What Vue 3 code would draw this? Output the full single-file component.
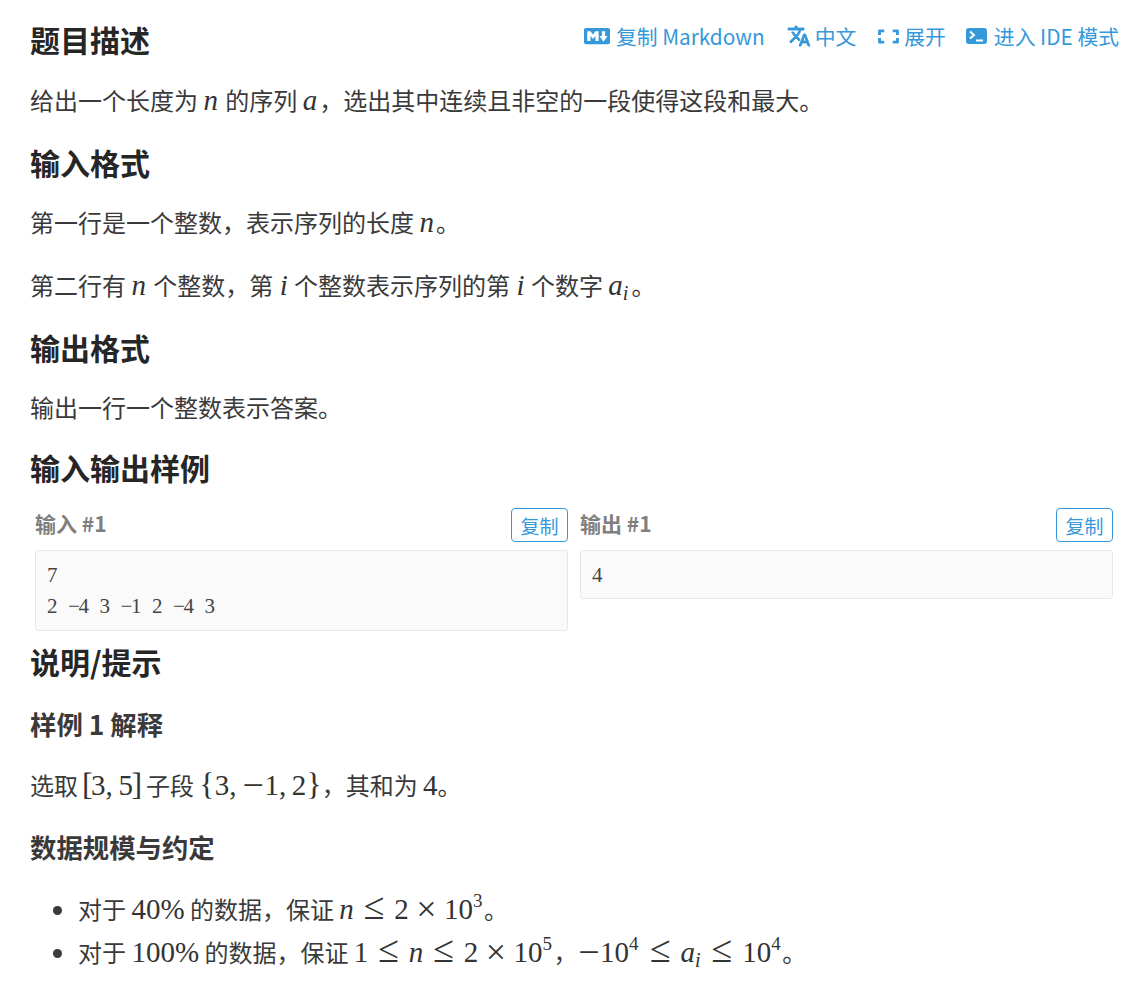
<script setup>
const samples = [
  { title: '输入 #1', lines: ['7', '2 -4 3 -1 2 -4 3'] },
  { title: '输出 #1', lines: ['4'] },
]
</script>

<template>
  <main class="page">
    <header class="head">
      <h2>题目描述</h2>
      <nav class="tools">
        <a class="tool">
          <svg class="i-md" viewBox="0 0 16 16"><path fill="currentColor" d="M14.85 3c.63 0 1.15.52 1.14 1.15v7.7c0 .63-.51 1.15-1.15 1.15H1.15C.52 13 0 12.48 0 11.84V4.15C0 3.52.52 3 1.15 3ZM9 11V5H7L5.5 7 4 5H2v6h2V8l1.5 1.92L7 8v3Zm2.99.5L14.5 8H13V5h-2v3H9.5Z"/></svg>
          <span>复制 Markdown</span>
        </a>
        <a class="tool tool-gap">
          <svg class="i-tr" viewBox="0 0 24 24"><path fill="currentColor" stroke="currentColor" stroke-width=".9" d="M12.87 15.07l-2.54-2.51.03-.03c1.74-1.94 2.98-4.17 3.71-6.53H17V4h-7V2H8v2H1v1.99h11.17C11.5 7.92 10.44 9.75 9 11.35 8.07 10.32 7.3 9.19 6.69 8h-2c.73 1.63 1.73 3.17 2.98 4.56l-5.09 5.02L4 19l5-5 3.11 3.11.76-2.04zM18.5 10h-2L12 22h2l1.12-3h4.75L21 22h2l-4.5-12zm-2.62 7l1.62-4.33L19.12 17h-3.24z"/></svg>
          <span>中文</span>
        </a>
        <a class="tool tool-gap">
          <svg class="i-ex" viewBox="0 0 22 18"><path fill="none" stroke="currentColor" stroke-width="3" stroke-linejoin="round" d="M1.5 7.5V3h5M15.5 3h5v4.5M20.5 10.5V15h-5M6.5 15h-5v-4.5"/></svg>
          <span>展开</span>
        </a>
        <a class="tool">
          <svg class="i-te" viewBox="0 0 21 16"><rect width="21" height="16" rx="3" fill="currentColor"/><path fill="none" stroke="#fff" stroke-width="2" d="M4 3.5 8 7 4 10.5M10 12.5h7"/></svg>
          <span>进入 IDE 模式</span>
        </a>
      </nav>
    </header>

    <p>给出一个长度为 <i class="m v">n</i> 的序列 <i class="m v">a</i>，选出其中连续且非空的一段使得这段和最大。</p>

    <h2>输入格式</h2>
    <p>第一行是一个整数，表示序列的长度 <i class="m v">n</i>。</p>
    <p>第二行有 <i class="m v">n</i> 个整数，第 <i class="m vi">i</i> 个整数表示序列的第 <i class="m vi">i</i> 个数字 <span class="m v"><i>a</i><sub>i</sub></span>。</p>

    <h2>输出格式</h2>
    <p class="plain">输出一行一个整数表示答案。</p>

    <h2>输入输出样例</h2>
    <section class="samples">
      <div v-for="s in samples" :key="s.title" class="sample">
        <div class="sample-top">
          <b>{{ s.title }}</b>
          <button class="copy">复制</button>
        </div>
        <pre class="code"><div v-for="(line, n) in s.lines" :key="n" class="code-line"><span v-for="(c, k) in line" :key="k" class="ch">{{ c === '-' ? '−' : c }}</span></div></pre>
      </div>
    </section>

    <h2 class="after-samples">说明/提示</h2>
    <h3>样例 1 解释</h3>
    <p>选取 <span class="m"><span class="br">[</span>3<span class="cm">,</span>5<span class="br">]</span></span> 子段 <span class="m"><span class="brace">{</span>3<span class="cm">,</span><span class="op">−</span>1<span class="cm">,</span>2<span class="brace">}</span></span>，其和为 <span class="m">4</span>。</p>

    <h3>数据规模与约定</h3>
    <ul>
      <li>对于 <span class="m">40%</span> 的数据，保证 <span class="m"><i>n</i><span class="rel">≤</span>2<span class="bin">×</span>10<sup>3</sup></span>。</li>
      <li>对于 <span class="m">100%</span> 的数据，保证 <span class="m">1<span class="rel">≤</span><i>n</i><span class="rel">≤</span>2<span class="bin">×</span>10<sup>5</sup></span>，<span class="m"><span class="op">−</span>10<sup>4</sup><span class="rel">≤</span><i>a</i><sub>i</sub><span class="rel">≤</span>10<sup>4</sup></span>。</li>
    </ul>
  </main>
</template>

<style scoped>
.page {
  width: 1141px;
  box-sizing: border-box;
  padding: 18px 22px 0 30px;
  font-family: "Noto Sans CJK SC", "Noto Sans", sans-serif;
  font-size: 24px;
  line-height: 42px;
  color: #3a3a3a;
}
.head {
  display: flex;
  justify-content: space-between;
  align-items: flex-start;
}
h2 {
  margin: 20px 0 18px;
  font-size: 30px;
  line-height: 42px;
  font-weight: 700;
  color: #262626;
}
.head h2 { margin: 0 0 19px; }
h3 {
  margin: 20px 0 19px;
  font-size: 26.4px;
  line-height: 42px;
  font-weight: 700;
  color: #3a3a3a;
}
p { margin: 0 0 19px; }
h2 + p { margin-bottom: 20px; }
p + p { margin-top: 21px; margin-bottom: 20px; }
p.plain { margin-bottom: 18px; }
h2 + p.plain + h2 { margin-top: 18px; }
.tools {
  display: flex;
  gap: 20px;
  padding-top: 1px;
  font-size: 20.8px;
  line-height: 34px;
  color: #3498db;
}
.tool { display: inline-flex; align-items: center; gap: 5px; white-space: nowrap; }
.tool-gap { margin-left: 2px; }
.i-md { width: 26px; height: 26px; margin-right: 1px; }
.i-tr { width: 24px; height: 24px; margin-right: -1px; }
.i-ex { width: 21px; height: 17px; }
.i-te { width: 21px; height: 16px; margin-right: 2px; }
.m {
  font-family: "Liberation Serif", serif;
  font-size: 29px;
  line-height: 1;
  color: #333;
}
i.m, .m i { font-style: italic; }
.v { padding: 0 2px 0 0; }
.vi { padding: 0 1px; }
.cm { margin-right: 5.6px; }
.br { font-size: 32px; margin: 0 -1.5px; }
.brace { font-size: 32px; }
.rel, .bin, .op {
  display: inline-block;
  text-align: center;
  line-height: 0;
  font-family: "Liberation Serif", serif;
}
.rel { width: 22.5px; margin: 0 9px; font-size: 38px; }
.bin { width: 22.5px; margin: 0 6.4px; font-size: 36px; vertical-align: -2px; }
.op { width: 22.5px; font-size: 38px; vertical-align: -3px; }
.m sub { font-size: 20px; font-style: italic; line-height: 0; vertical-align: -5px; margin-right: 1px; }
.m sup { font-size: 19px; line-height: 0; vertical-align: 12px; margin-right: 1.5px; }
.samples {
  display: grid;
  grid-template-columns: 533px 533px;
  gap: 12px;
  margin: 20px 0 0 5px;
  align-items: start;
}
.sample-top {
  display: flex;
  justify-content: space-between;
  align-items: center;
  height: 34px;
  margin-bottom: 8px;
}
.sample-top b { font-size: 21px; color: #7f7f7f; margin-bottom: 4px; }
.copy {
  width: 57px;
  height: 34px;
  padding: 0;
  border: 1px solid #3498db;
  border-radius: 4px;
  background: #fff;
  color: #3498db;
  font: 19px/1 "Noto Sans CJK SC", sans-serif;
}
.code {
  margin: 0;
  padding: 9px 11px 7px;
  background: #fafafa;
  border: 1px solid #e7e7e7;
  border-radius: 3px;
  font-family: "Liberation Serif", serif;
  font-size: 21px;
  line-height: 31px;
  color: #444;
}
.code-line { display: flex; height: 31px; }
.code-line + .code-line { margin-bottom: 1px; }
.ch { display: inline-block; width: 10.5px; text-align: center; }
.after-samples { margin-top: 9px; margin-bottom: 21px; }
ul { margin: 19px 0 0; padding: 0 0 0 48px; }
li { line-height: 43px; }
</style>

<style>
body { margin: 0; background: #fff; }
</style>
